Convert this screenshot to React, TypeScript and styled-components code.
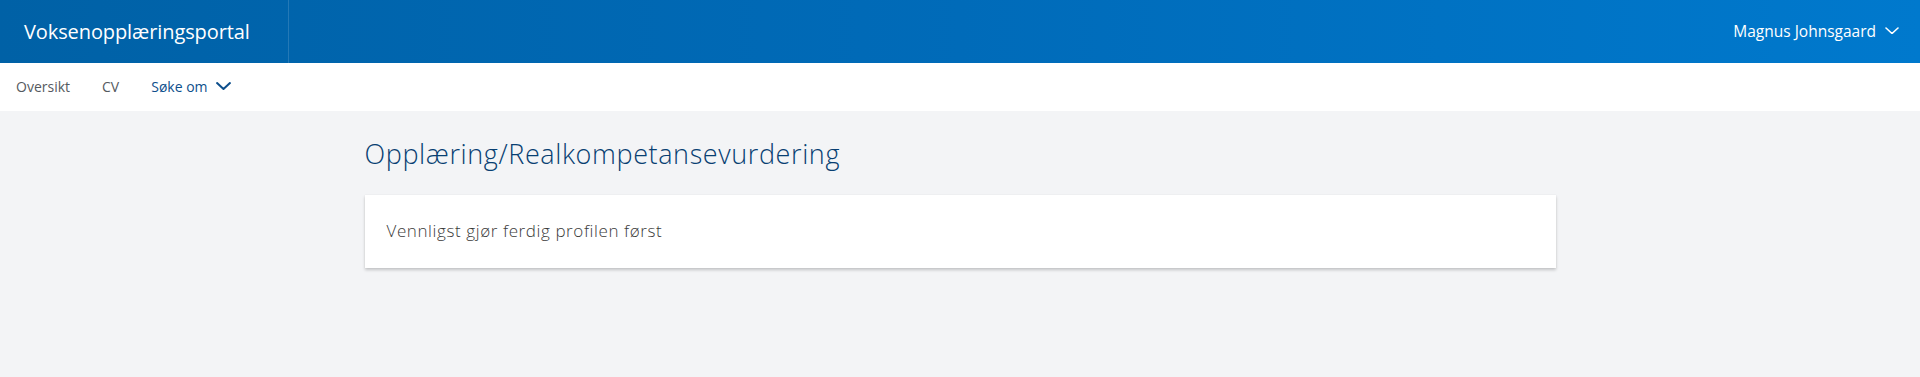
import React from "react";
import styled, { createGlobalStyle } from "styled-components";

const GlobalStyle = createGlobalStyle`
  * { box-sizing: border-box; }
  html, body { margin: 0; padding: 0; }
  body {
    font-family: "Open Sans", "Liberation Sans", sans-serif;
    background: #f3f4f6;
    min-height: 377px;
  }
`;

const Header = styled.header`
  height: 63px;
  display: flex;
  align-items: stretch;
  justify-content: space-between;
  background: linear-gradient(90deg, #0061a6 0%, #006bb9 50%, #0079cd 100%);
  color: #ffffff;
`;

const Brand = styled.a`
  width: 289px;
  display: flex;
  align-items: center;
  padding-left: 24px;
  padding-bottom: 1px;
  border-right: 1px solid rgba(255, 255, 255, 0.14);
  font-size: 20px;
  color: #ffffff;
  text-decoration: none;
  letter-spacing: -0.1px;
`;

const UserMenu = styled.button`
  display: flex;
  align-items: center;
  gap: 9px;
  padding: 0 21px 2px 0;
  background: none;
  border: none;
  color: #ffffff;
  font-family: "Open Sans", "Liberation Sans", sans-serif;
  font-size: 15.5px;
  cursor: pointer;
`;

const Nav = styled.nav`
  height: 48px;
  background: #ffffff;
  display: flex;
  align-items: center;
  padding-left: 16px;
  padding-bottom: 2px;
`;

const NavItem = styled.a<{ $active?: boolean }>`
  display: flex;
  align-items: center;
  gap: 8px;
  font-size: 14px;
  color: ${(p) => (p.$active ? "#0d4f8c" : "#555a60")};
  margin-right: ${(p) => (p.$active ? "0" : "32px")};
  text-decoration: none;
  cursor: pointer;
`;

const Main = styled.main`
  width: 1191px;
  margin: 0 auto;
  padding-top: 27px;
`;

const Title = styled.h1`
  margin: 0 0 25px 0;
  font-family: "Open Sans", "Liberation Sans", sans-serif;
  font-weight: 300;
  font-size: 27px;
  line-height: 32px;
  color: #083f72;
  letter-spacing: 0.6px;
`;

const Card = styled.section`
  background: #ffffff;
  padding: 24px 22px 25px;
  box-shadow: 0 2px 3px rgba(0, 0, 0, 0.2), 0 0 1px rgba(0, 0, 0, 0.08);
`;

const CardText = styled.p`
  margin: 0;
  font-size: 17px;
  line-height: 24px;
  color: #3a3a3a;
  font-weight: 300;
  letter-spacing: 0.6px;
`;

const Chevron = ({ color, size, stroke }: { color: string; size: number; stroke: number }) => (
  <svg width={size} height={size * 0.55} viewBox="0 0 14 7.7" fill="none">
    <path d="M1 1l6 5.5L13 1" stroke={color} strokeWidth={stroke} strokeLinecap="round" strokeLinejoin="round" />
  </svg>
);

export default function App() {
  return (
    <>
      <GlobalStyle />
      <Header>
        <Brand>Voksenopplæringsportal</Brand>
        <UserMenu>
          Magnus Johnsgaard
          <Chevron color="#ffffff" size={14} stroke={1.6} />
        </UserMenu>
      </Header>
      <Nav>
        <NavItem>Oversikt</NavItem>
        <NavItem>CV</NavItem>
        <NavItem $active>
          Søke om
          <Chevron color="#0d4f8c" size={15} stroke={1.9} />
        </NavItem>
      </Nav>
      <Main>
        <Title>Opplæring/Realkompetansevurdering</Title>
        <Card>
          <CardText>Vennligst gjør ferdig profilen først</CardText>
        </Card>
      </Main>
    </>
  );
}
